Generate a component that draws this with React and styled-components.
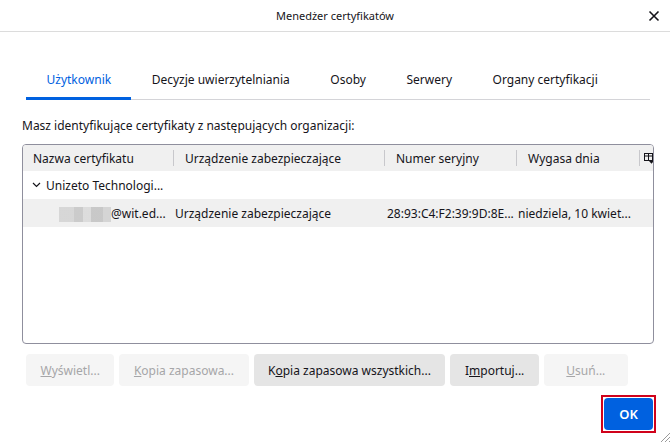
import React from "react";
import styled, { createGlobalStyle } from "styled-components";

const GlobalStyle = createGlobalStyle`
  html, body {
    margin: 0;
    padding: 0;
    background: #ffffff;
  }
  body {
    font-family: "Noto Sans", "Open Sans", "Liberation Sans", sans-serif;
    color: #15141a;
  }
`;

const tabs = [
  "Użytkownik",
  "Decyzje uwierzytelniania",
  "Osoby",
  "Serwery",
  "Organy certyfikacji",
];

const columns = [
  { label: "Nazwa certyfikatu", width: 150 },
  { label: "Urządzenie zabezpieczające", width: 211 },
  { label: "Numer seryjny", width: 132 },
  { label: "Wygasa dnia", width: 123 },
];

const buttons = [
  { key: "W", rest: "yświetl...", disabled: true },
  { key: "K", rest: "opia zapasowa...", disabled: true },
  { pre: "K", key: "o", rest: "pia zapasowa wszystkich...", disabled: false },
  { pre: "I", key: "m", rest: "portuj...", disabled: false },
  { key: "U", rest: "suń...", disabled: true },
];

const App = () => {
  return (
    <>
      <GlobalStyle />
      <StDialog>
        <StTitleBar>
          <span />
          <StTitle>Menedżer certyfikatów</StTitle>
          <StClose aria-label="Zamknij">
            <svg width="12" height="12" viewBox="0 0 12 12">
              <path
                d="M1.5 1.5 L10.5 10.5 M10.5 1.5 L1.5 10.5"
                stroke="#15141a"
                strokeWidth="1.6"
                fill="none"
              />
            </svg>
          </StClose>
        </StTitleBar>

        <StBody>
          <StTabs>
            {tabs.map((t, i) => (
              <StTab key={t} $active={i === 0}>
                {t}
              </StTab>
            ))}
          </StTabs>

          <StLabel>Masz identyfikujące certyfikaty z następujących organizacji:</StLabel>

          <StTable>
            <StHeadRow>
              {columns.map((c, i) => (
                <StHeadCell key={c.label} $w={c.width} $first={i === 0}>
                  {c.label}
                </StHeadCell>
              ))}
              <StPicker>
                <svg width="10" height="11" viewBox="0 0 10 11">
                  <rect x="0.5" y="0.5" width="8" height="7" fill="none" stroke="#15141a" />
                  <path d="M0.5 3 H8.5 M4.5 0.5 V7.5" stroke="#15141a" />
                  <path d="M5 8 L10 8 L7.5 10.8 Z" fill="#15141a" />
                </svg>
              </StPicker>
            </StHeadRow>

            <StRow>
              <StGroupCell>
                <svg width="9" height="6" viewBox="0 0 9 6">
                  <path d="M1 1 L4.5 4.5 L8 1" stroke="#15141a" strokeWidth="1.2" fill="none" />
                </svg>
                Unizeto Technologi...
              </StGroupCell>
            </StRow>

            <StRow $striped>
              <StCell $w={150} $indent={36}>
                <StBlur />
                @wit.ed...
              </StCell>
              <StCell $w={211} $indent={2}>Urządzenie zabezpieczające</StCell>
              <StCell $w={132} $indent={3}>28:93:C4:F2:39:9D:8E...</StCell>
              <StCell $w={123} $indent={2}>niedziela, 10 kwiet...</StCell>
            </StRow>
          </StTable>

          <StButtonRow>
            {buttons.map((b) => (
              <StButton key={b.rest} disabled={b.disabled}>
                {b.pre}
                <u>{b.key}</u>
                {b.rest}
              </StButton>
            ))}
          </StButtonRow>

          <StFooter>
            <StOkFrame>
              <StOk>OK</StOk>
            </StOkFrame>
          </StFooter>
        </StBody>

        <StGrip>
          <svg width="11" height="11" viewBox="0 0 11 11">
            <path d="M11 2 L2 11 M11 6 L6 11 M11 10 L10 11" stroke="#9a9a9a" strokeWidth="1" />
          </svg>
        </StGrip>
      </StDialog>
    </>
  );
};

export default App;

const StDialog = styled.div`
  position: relative;
  width: 670px;
  height: 442px;
  display: flex;
  flex-direction: column;
  background: #ffffff;
  overflow: hidden;
`;

const StTitleBar = styled.div`
  height: 31px;
  display: grid;
  grid-template-columns: 1fr auto 1fr;
  align-items: center;
  border-bottom: 1px solid #dcdcdc;
`;

const StTitle = styled.div`
  font-size: 11px;
  color: #15141a;
`;

const StClose = styled.div`
  justify-self: end;
  width: 12px;
  height: 12px;
  margin-right: 10px;
  display: flex;
`;

const StBody = styled.div`
  flex: 1;
  display: flex;
  flex-direction: column;
  padding: 0 16px 0 22px;
`;

const StTabs = styled.div`
  margin: 31px 4px 0 4px;
  display: flex;
  border-bottom: 1px solid #d4d4d8;
`;

const StTab = styled.div`
  padding: 9px 20px 12px 20.5px;
  font-size: 12px;
  line-height: 16px;
  color: ${(p) => (p.$active ? "#0061e0" : "#15141a")};
  box-shadow: ${(p) => (p.$active ? "inset 0 -3px 0 #0061e0" : "none")};
  margin-bottom: -1px;
  white-space: nowrap;
`;

const StLabel = styled.div`
  margin-top: 17px;
  font-size: 12px;
  line-height: 18px;
`;

const StTable = styled.div`
  margin-top: 9px;
  width: 632px;
  height: 200px;
  box-sizing: border-box;
  border: 1px solid #8f8f9d;
  border-radius: 4px;
  overflow: hidden;
`;

const StHeadRow = styled.div`
  height: 26px;
  display: flex;
  align-items: center;
  background: #f0f0f0;
`;

const StHeadCell = styled.div`
  width: ${(p) => p.$w}px;
  box-sizing: border-box;
  height: 16px;
  display: flex;
  align-items: center;
  padding-left: ${(p) => (p.$first ? 10 : 11)}px;
  border-left: ${(p) => (p.$first ? "none" : "1px solid #c8c8cc")};
  font-size: 12px;
  white-space: nowrap;
  overflow: hidden;
  flex-shrink: 0;
`;

const StPicker = styled.div`
  flex: 1;
  height: 16px;
  border-left: 1px solid #c8c8cc;
  display: flex;
  align-items: center;
  padding-left: 4px;
`;

const StRow = styled.div`
  height: 28px;
  display: flex;
  align-items: center;
  background: ${(p) => (p.$striped ? "#f0f0f0" : "transparent")};
  font-size: 12px;
  white-space: nowrap;
`;

const StGroupCell = styled.div`
  display: flex;
  align-items: center;
  gap: 5px;
  padding-left: 9px;
`;

const StCell = styled.div`
  width: ${(p) => p.$w}px;
  box-sizing: border-box;
  padding-left: ${(p) => p.$indent}px;
  display: flex;
  align-items: center;
  overflow: hidden;
  flex-shrink: 0;
`;

const StBlur = styled.span`
  display: inline-block;
  width: 52px;
  height: 15px;
  margin-top: 2px;
  background:
    linear-gradient(90deg, #d4d4d4 0 28%, #c7c7c7 28% 46%, #dadada 46% 62%, #c4c4c4 62% 84%, #d2d2d2 84% 100%);
  opacity: 0.9;
`;

const StButtonRow = styled.div`
  margin-top: 10px;
  padding-left: 4px;
  display: flex;
  gap: 5px;
`;

const StButton = styled.button`
  height: 32px;
  min-width: 84px;
  padding: 0 14.5px;
  border: none;
  border-radius: 4px;
  font-family: inherit;
  font-size: 12px;
  background: ${(p) => (p.disabled ? "#f5f5f5" : "#e5e5e5")};
  color: ${(p) => (p.disabled ? "#a6a6a8" : "#15141a")};
  white-space: nowrap;
`;

const StFooter = styled.div`
  margin-top: 9px;
  margin-right: -2px;
  display: flex;
  justify-content: flex-end;
`;

const StOkFrame = styled.div`
  border: 2px solid #d0021b;
  padding: 1px;
  display: flex;
`;

const StOk = styled.button`
  width: 49px;
  height: 32px;
  border: none;
  border-radius: 4px;
  background: #0061e0;
  color: #ffffff;
  font-family: inherit;
  font-size: 13px;
  font-weight: 600;
`;

const StGrip = styled.div`
  position: absolute;
  right: 0;
  bottom: 0;
  width: 11px;
  height: 11px;
  display: flex;
`;
